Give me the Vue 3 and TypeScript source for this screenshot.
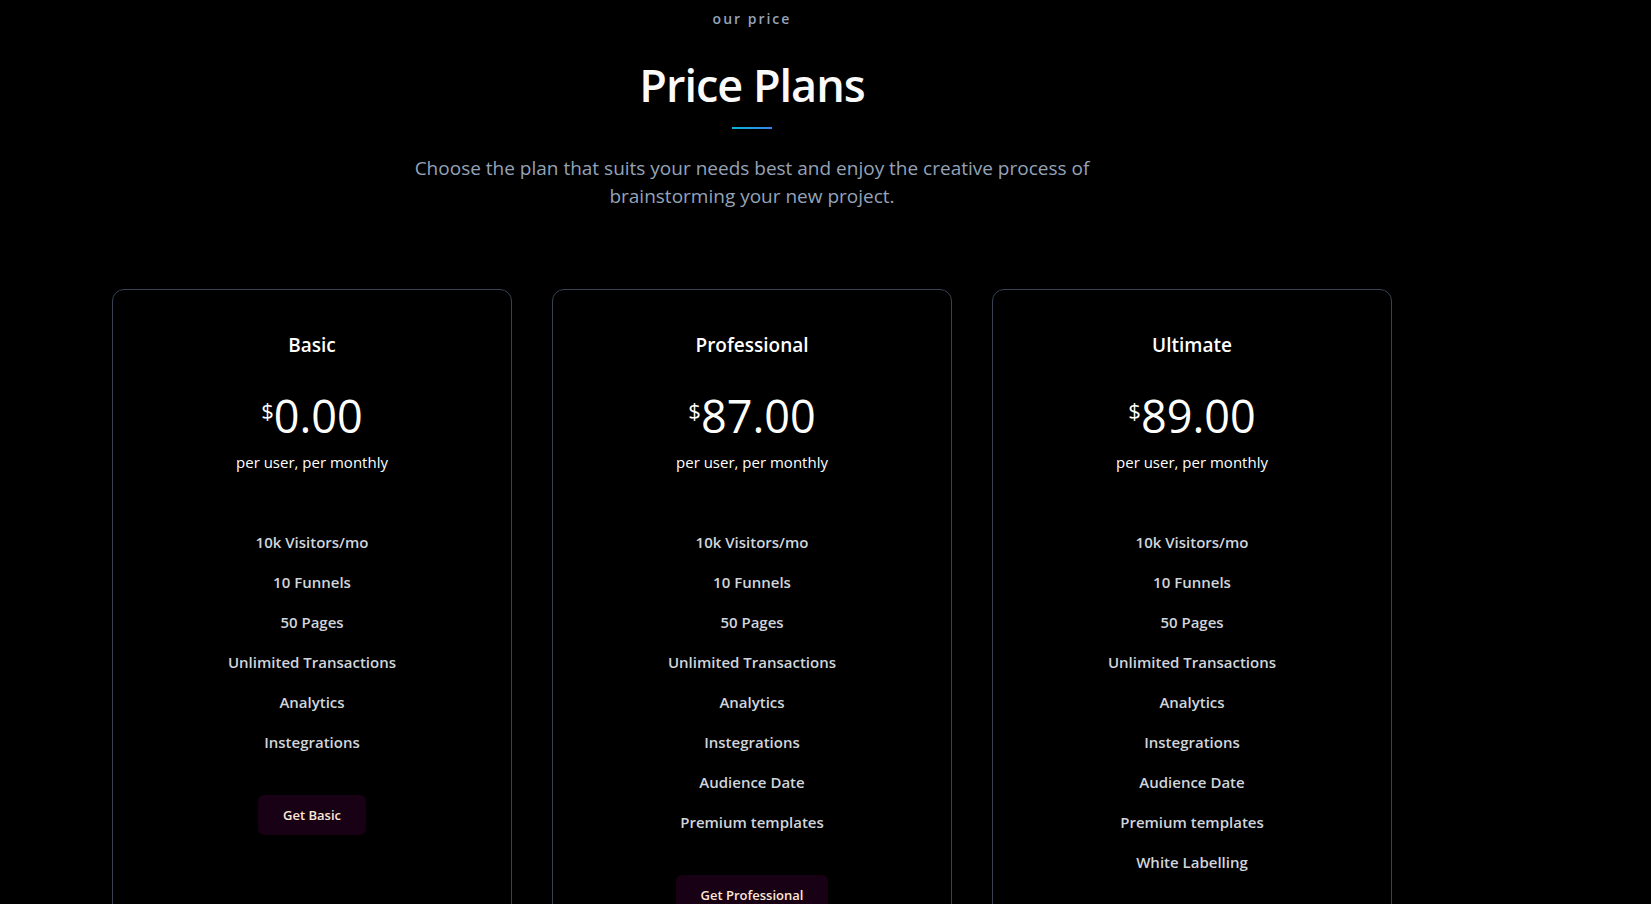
<script setup lang="ts">
interface Plan {
  name: string
  price: string
  features: string[]
}

const core: string[] = [
  '10k Visitors/mo',
  '10 Funnels',
  '50 Pages',
  'Unlimited Transactions',
  'Analytics',
  'Instegrations',
]

const plans: Plan[] = [
  { name: 'Basic', price: '0.00', features: core },
  { name: 'Professional', price: '87.00', features: [...core, 'Audience Date', 'Premium templates'] },
  {
    name: 'Ultimate',
    price: '89.00',
    features: [...core, 'Audience Date', 'Premium templates', 'White Labelling'],
  },
]
</script>

<template>
  <main class="pricing">
    <header class="intro">
      <p class="eyebrow">our price</p>
      <h1 class="title">Price Plans</h1>
      <div class="rule"></div>
      <p class="lead">
        Choose the plan that suits your needs best and enjoy the creative process of brainstorming
        your new project.
      </p>
    </header>
    <section class="plans">
      <article v-for="plan in plans" :key="plan.name" class="plan">
        <h2 class="name">{{ plan.name }}</h2>
        <p class="price"><span class="currency">$</span><span class="amount">{{ plan.price }}</span></p>
        <p class="period">per user, per monthly</p>
        <ul class="features">
          <li v-for="feature in plan.features" :key="feature">{{ feature }}</li>
        </ul>
        <button type="button" class="cta">Get {{ plan.name }}</button>
      </article>
    </section>
  </main>
</template>

<style>
body {
  margin: 0;
  background: #000;
}
</style>

<style scoped>
.pricing {
  max-width: 1280px;
  margin-left: 112px;
  padding: 7px 0 40px;
  font-family: 'Segoe UI', 'Open Sans', 'Noto Sans', sans-serif;
  color: #fff;
  text-align: center;
}

h1,
h2,
p,
ul {
  margin: 0;
  padding: 0;
}

.intro {
  display: flex;
  flex-direction: column;
  align-items: center;
}

.eyebrow {
  font-size: 14px;
  line-height: 24px;
  font-weight: 600;
  letter-spacing: 2px;
  color: #94a3b8;
}

.title {
  margin-top: 24px;
  font-size: 45px;
  line-height: 60px;
  font-weight: 600;
  letter-spacing: -1px;
  color: #fafafa;
}

.rule {
  width: 40px;
  height: 2px;
  margin-top: 12px;
  background: linear-gradient(to right, #06b6d4, #3b82f6);
}

.lead {
  max-width: 768px;
  margin-top: 25px;
  font-size: 19px;
  line-height: 28px;
  color: #94a3b8;
}

.plans {
  display: grid;
  grid-template-columns: repeat(3, 1fr);
  gap: 40px;
  margin-top: 79px;
}

.plan {
  display: flex;
  flex-direction: column;
  align-items: center;
  padding: 40px;
  border: 1px solid #374151;
  border-radius: 12px;
}

.name {
  font-size: 19px;
  line-height: 30px;
  font-weight: 600;
}

.price {
  display: flex;
  margin-top: 32px;
  line-height: 48px;
}

.currency {
  font-size: 22px;
  line-height: 36px;
}

.amount {
  font-size: 45px;
}

.period {
  margin-top: 10px;
  font-size: 15px;
  line-height: 24px;
}

.features {
  margin-top: 56px;
  list-style: none;
  font-size: 15px;
  line-height: 24px;
  font-weight: 600;
  color: #d1d5db;
}

.features li + li {
  margin-top: 16px;
}

.cta {
  margin-top: 41px;
  padding: 10px 25px;
  border: 0;
  border-radius: 6px;
  background: #180015;
  color: #fde8d7;
  font: inherit;
  font-size: 13px;
  line-height: 20px;
  font-weight: 600;
  cursor: pointer;
}
</style>
